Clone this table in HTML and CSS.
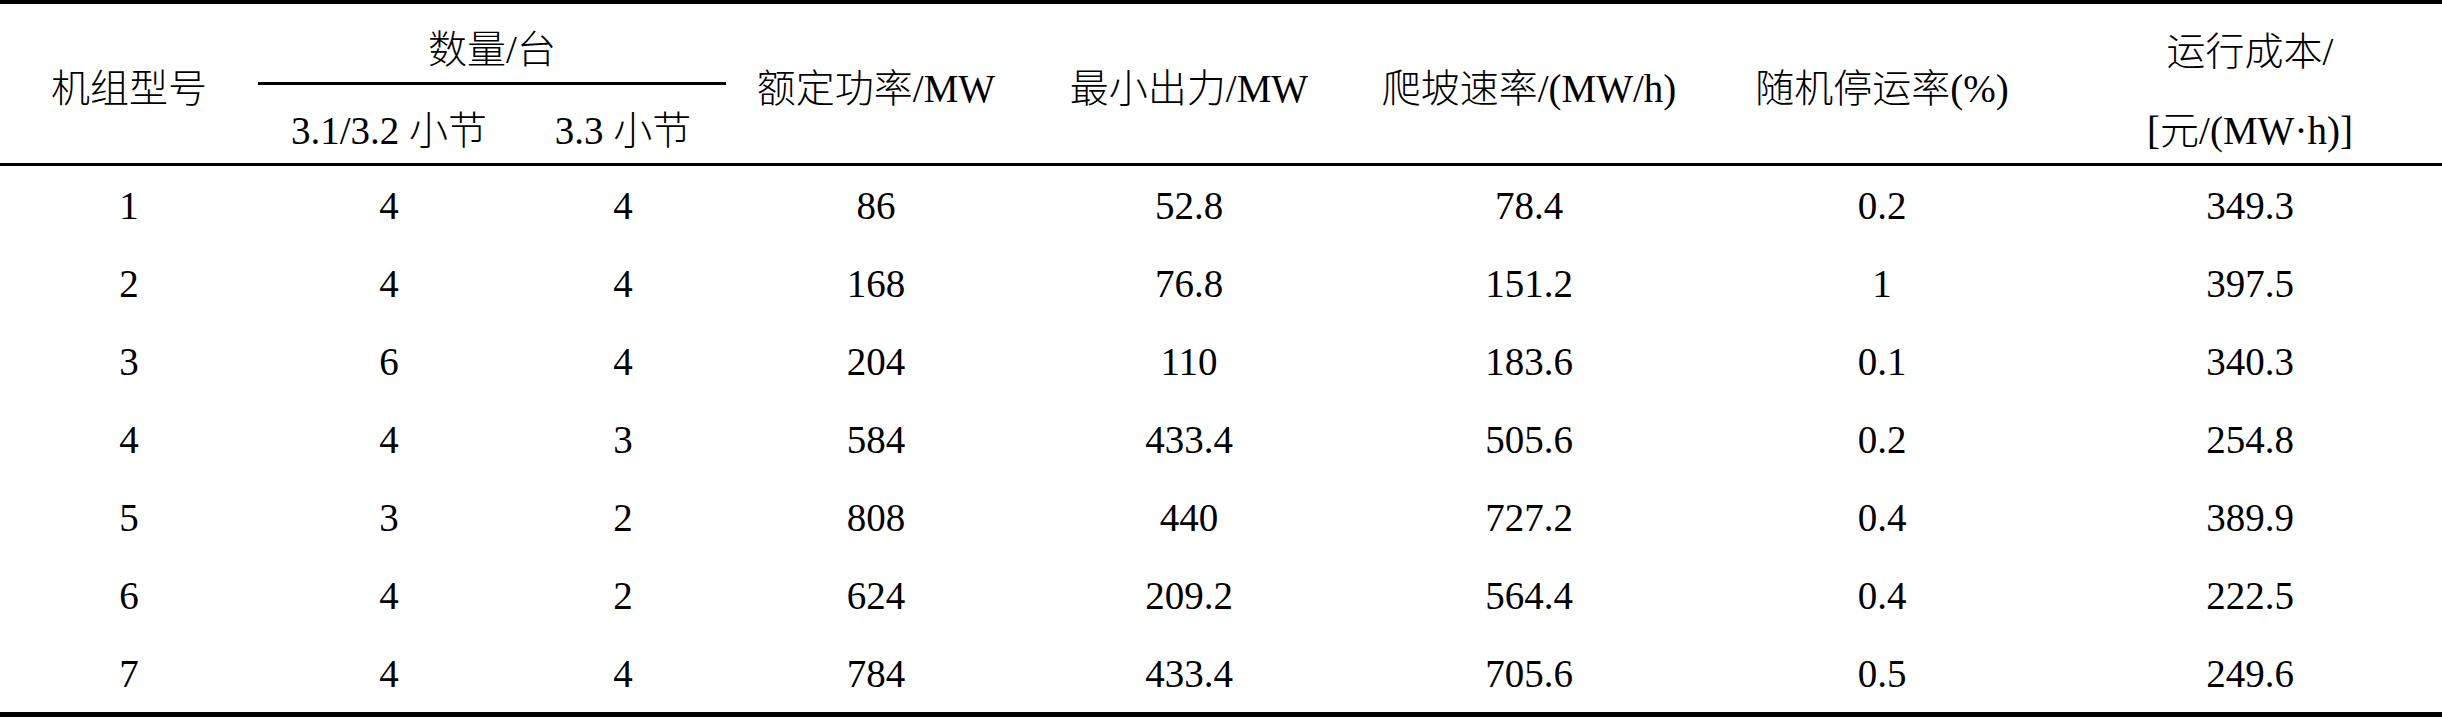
FILE: index.html
```html
<!DOCTYPE html>
<html lang="zh">
<head>
    <meta charset="UTF-8">
    <title>机组参数</title>
    <link rel="stylesheet" href="styles.css">
</head>
<body>
<!-- Tabla de parámetros de los grupos -->
<table class="unit-table">
    <colgroup>
        <col class="col-type">
        <col class="col-num-a">
        <col class="col-num-b">
        <col class="col-rated">
        <col class="col-min">
        <col class="col-ramp">
        <col class="col-outage">
        <col class="col-cost">
    </colgroup>
    <thead>
        <tr class="head-top">
            <th rowspan="2" class="head-span">机组型号</th>
            <th colspan="2" class="head-group">数量/台</th>
            <th rowspan="2" class="head-span">额定功率/MW</th>
            <th rowspan="2" class="head-span">最小出力/MW</th>
            <th rowspan="2" class="head-span">爬坡速率/(MW/h)</th>
            <th rowspan="2" class="head-span">随机停运率(%)</th>
            <th class="head-cost">运行成本/</th>
        </tr>
        <tr class="head-sub">
            <th>3.1/3.2 小节</th>
            <th>3.3 小节</th>
            <th>[元/(MW·h)]</th>
        </tr>
    </thead>
    <tbody>
        <tr><td>1</td><td>4</td><td>4</td><td>86</td><td>52.8</td><td>78.4</td><td>0.2</td><td>349.3</td></tr>
        <tr><td>2</td><td>4</td><td>4</td><td>168</td><td>76.8</td><td>151.2</td><td>1</td><td>397.5</td></tr>
        <tr><td>3</td><td>6</td><td>4</td><td>204</td><td>110</td><td>183.6</td><td>0.1</td><td>340.3</td></tr>
        <tr><td>4</td><td>4</td><td>3</td><td>584</td><td>433.4</td><td>505.6</td><td>0.2</td><td>254.8</td></tr>
        <tr><td>5</td><td>3</td><td>2</td><td>808</td><td>440</td><td>727.2</td><td>0.4</td><td>389.9</td></tr>
        <tr><td>6</td><td>4</td><td>2</td><td>624</td><td>209.2</td><td>564.4</td><td>0.4</td><td>222.5</td></tr>
        <tr><td>7</td><td>4</td><td>4</td><td>784</td><td>433.4</td><td>705.6</td><td>0.5</td><td>249.6</td></tr>
    </tbody>
</table>
</body>
</html>
```

FILE: styles.css
```css
/* General */
body {
    margin: 0;
    background-color: #fff;
    color: #000;
    font-family: "Liberation Serif", "Noto Sans CJK SC", serif;
}

/* Tabla de tres líneas */
.unit-table {
    width: 2442px;
    table-layout: fixed;
    border-collapse: separate;
    border-spacing: 0;
    border-top: 4px solid #000;
    border-bottom: 5px solid #000;
}

.col-type { width: 258px; }
.col-num-a { width: 262px; }
.col-num-b { width: 206px; }
.col-rated { width: 300px; }
.col-min { width: 326px; }
.col-ramp { width: 354px; }
.col-outage { width: 352px; }
.col-cost { width: 384px; }

th, td {
    padding: 0;
    font-size: 39px;
    font-weight: 300; /* el chino queda más fino */
    text-align: center;
    vertical-align: middle;
    white-space: nowrap;
}

/* Cabecera */
.head-top {
    height: 81px;
}

.head-sub {
    height: 81px;
}

.head-span {
    border-bottom: 3px solid #000;
    padding-top: 3px;
}

.head-group {
    border-bottom: 3px solid #000;
    padding-top: 6px;
}

.head-cost {
    padding-top: 6px;
}

.head-sub th {
    border-bottom: 3px solid #000;
    padding-top: 5px;
}

/* Filas de datos */
tbody tr {
    height: 78px;
}

tbody td {
    line-height: 40px;
    padding-top: 1px;
}
```
